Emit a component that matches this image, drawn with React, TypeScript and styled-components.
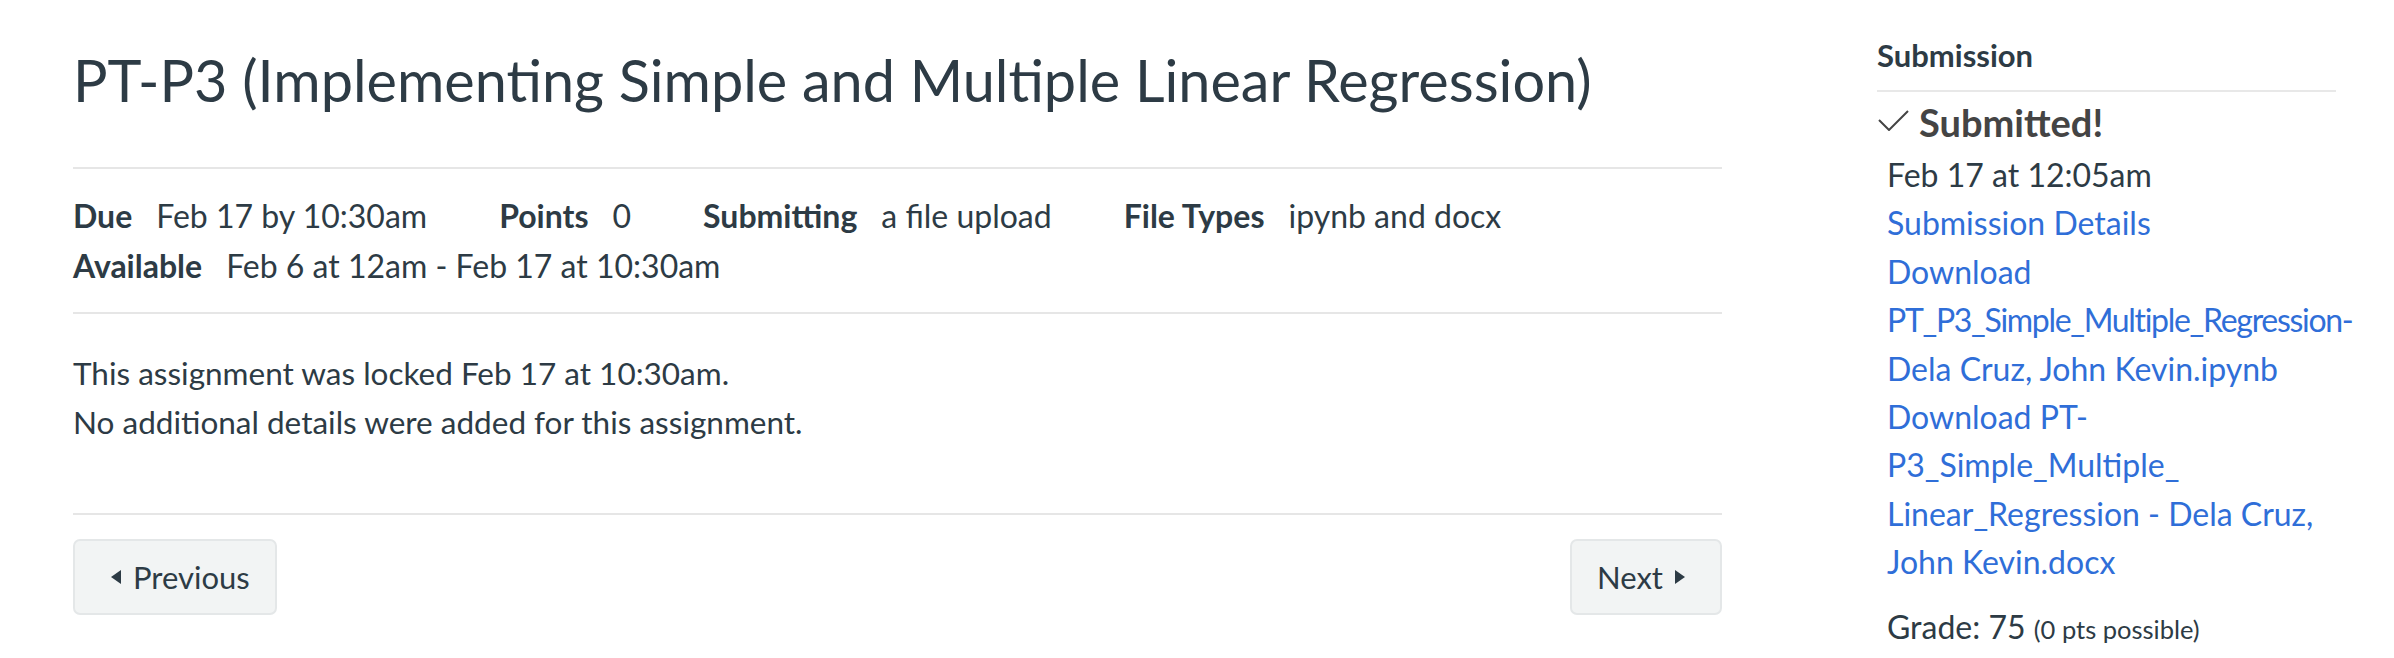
import React from "react";
import styled, { createGlobalStyle } from "styled-components";

const Global = createGlobalStyle`
  html, body { margin: 0; padding: 0; background: #ffffff; }
  body { font-family: Lato, "Noto Sans", "Liberation Sans", sans-serif; color: #2d3b45; }
  * { box-sizing: border-box; }
`;

const Page = styled.div`
  display: flex;
  align-items: flex-start;
  gap: 155px;
  padding: 0 58px 0 73px;
  width: 2394px;
  height: 658px;
  overflow: hidden;
`;

const Main = styled.main`
  width: 1649px;
  flex: none;
  padding-top: 46px;
`;

const Title = styled.h1`
  margin: 0;
  font-size: 57.6px;
  font-weight: 400;
  line-height: 68px;
  color: #2d3b45;
  white-space: nowrap;
`;

const Rule = styled.hr<{ $top: number }>`
  margin: ${(p) => p.$top}px 0 0 0;
  border: 0;
  border-top: 2px solid #e6e6e6;
  height: 0;
`;

const Details = styled.div`
  padding: 22px 0 22px 0;
`;

const DetailRow = styled.div`
  display: flex;
  flex-wrap: nowrap;
  gap: 72px;
  font-size: 32px;
  line-height: 49.5px;
`;

const DetailItem = styled.div`
  display: flex;
  gap: 24px;
  white-space: nowrap;
`;

const Label = styled.span`
  font-weight: 700;
`;

const Body = styled.div`
  padding-top: 35px;
  font-size: 31.5px;
  line-height: 49px;
  padding-bottom: 66px;
`;

const Para = styled.p`
  margin: 0;
`;

const Nav = styled.div`
  display: flex;
  justify-content: space-between;
  margin-top: 24px;
`;

const NavButton = styled.button<{ $left: number; $right: number }>`
  display: inline-flex;
  align-items: center;
  gap: 12px;
  height: 76px;
  padding: 0 ${(p) => p.$right}px 0 ${(p) => p.$left}px;
  background: #f2f4f4;
  border: 2px solid #e4e7e8;
  border-radius: 7px;
  font-family: Lato, "Noto Sans", sans-serif;
  font-size: 31px;
  color: #2d3b45;
  cursor: pointer;
`;

const Caret = styled.svg`
  width: 10px;
  height: 14px;
  flex: none;
`;

const Aside = styled.aside`
  width: 459px;
  flex: none;
  padding-top: 37px;
`;

const SideHeading = styled.h2`
  margin: 0;
  font-size: 31px;
  font-weight: 700;
  line-height: 36px;
  color: #2d3b45;
`;

const SideRule = styled.hr`
  margin: 17px 0 0 0;
  border: 0;
  border-top: 2px solid #e8e8e8;
  height: 0;
`;

const Status = styled.div`
  display: flex;
  align-items: flex-start;
  gap: 10px;
  margin-top: 7px;
  font-size: 38px;
  font-weight: 700;
  line-height: 46px;
  color: #444444;
`;

const Check = styled.svg`
  width: 31px;
  height: 22px;
  margin-top: 10px;
  margin-left: 1px;
  flex: none;
`;

const SideList = styled.div`
  display: flex;
  flex-direction: column;
  align-items: flex-start;
  margin-top: 6px;
  padding-left: 10px;
  font-size: 32px;
  line-height: 48.4px;
`;

const SideText = styled.span`
  color: #2d3b45;
`;

const SideLink = styled.a`
  color: #2f6ed8;
  text-decoration: none;
  white-space: nowrap;
`;

const Line = styled.span<{ $tight?: boolean }>`
  display: block;
  letter-spacing: ${(p) => (p.$tight ? "-1.3px" : "normal")};
`;

const Grade = styled.div`
  margin-top: 16px;
  padding-left: 10px;
  font-size: 32px;
  line-height: 48.4px;
  color: #2d3b45;
  white-space: nowrap;
`;

const Small = styled.span`
  font-size: 25.5px;
`;

const LeftCaret = () => (
  <Caret viewBox="0 0 10 14">
    <polygon points="10,0 10,14 0,7" fill="#2d3b45" />
  </Caret>
);

const RightCaret = () => (
  <Caret viewBox="0 0 10 14">
    <polygon points="0,0 0,14 10,7" fill="#2d3b45" />
  </Caret>
);

export default function App() {
  return (
    <>
      <Global />
      <Page>
        <Main>
          <Title>PT-P3 (Implementing Simple and Multiple Linear Regression)</Title>
          <Rule $top={53} />
          <Details>
            <DetailRow>
              <DetailItem>
                <Label>Due</Label>
                <span>Feb 17 by 10:30am</span>
              </DetailItem>
              <DetailItem>
                <Label>Points</Label>
                <span>0</span>
              </DetailItem>
              <DetailItem>
                <Label>Submitting</Label>
                <span>a file upload</span>
              </DetailItem>
              <DetailItem>
                <Label>File Types</Label>
                <span>ipynb and docx</span>
              </DetailItem>
            </DetailRow>
            <DetailRow>
              <DetailItem>
                <Label>Available</Label>
                <span>Feb 6 at 12am - Feb 17 at 10:30am</span>
              </DetailItem>
            </DetailRow>
          </Details>
          <Rule $top={0} />
          <Body>
            <Para>This assignment was locked Feb 17 at 10:30am.</Para>
            <Para>No additional details were added for this assignment.</Para>
          </Body>
          <Rule $top={0} />
          <Nav>
            <NavButton $left={36} $right={25}>
              <LeftCaret />
              Previous
            </NavButton>
            <NavButton $left={25} $right={35}>
              Next
              <RightCaret />
            </NavButton>
          </Nav>
        </Main>
        <Aside>
          <SideHeading>Submission</SideHeading>
          <SideRule />
          <Status>
            <Check viewBox="0 0 31 22">
              <polyline points="1,11 11,21 30,2" fill="none" stroke="#444444" strokeWidth="2" />
            </Check>
            Submitted!
          </Status>
          <SideList>
            <SideText>Feb 17 at 12:05am</SideText>
            <SideLink href="#">Submission Details</SideLink>
            <SideLink href="#">
              <Line>Download</Line>
              <Line $tight>PT_P3_Simple_Multiple_Regression-</Line>
              <Line>Dela Cruz, John Kevin.ipynb</Line>
            </SideLink>
            <SideLink href="#">
              <Line>Download PT-</Line>
              <Line>P3_Simple_Multiple_</Line>
              <Line>Linear_Regression - Dela Cruz,</Line>
              <Line>John Kevin.docx</Line>
            </SideLink>
          </SideList>
          <Grade>
            Grade: 75 <Small>(0 pts possible)</Small>
          </Grade>
        </Aside>
      </Page>
    </>
  );
}
